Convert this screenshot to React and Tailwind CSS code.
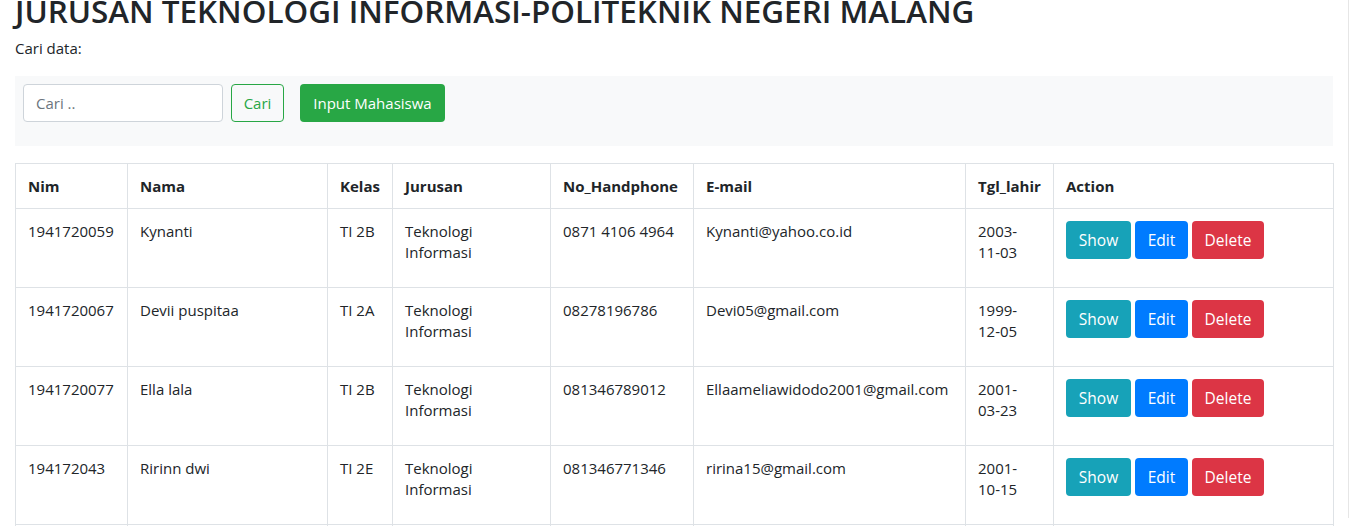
import React from "react";

const rows = [
  ["1941720059", "Kynanti", "TI 2B", "Teknologi Informasi", "0871 4106 4964", "Kynanti@yahoo.co.id", ["2003-", "11-03"]],
  ["1941720067", "Devii puspitaa", "TI 2A", "Teknologi Informasi", "08278196786", "Devi05@gmail.com", ["1999-", "12-05"]],
  ["1941720077", "Ella lala", "TI 2B", "Teknologi Informasi", "081346789012", "Ellaameliawidodo2001@gmail.com", ["2001-", "03-23"]],
  ["194172043", "Ririnn dwi", "TI 2E", "Teknologi Informasi", "081346771346", "ririna15@gmail.com", ["2001-", "10-15"]],
  ["1941720099", "Anisa", "TI 2C", "Teknologi Informasi", "081234567890", "anisa@gmail.com", ["2001-", "01-01"]],
];

const heads = ["Nim", "Nama", "Kelas", "Jurusan", "No_Handphone", "E-mail", "Tgl_lahir", "Action"];
const widths = [112, 200, 65, 158, 143, 272, 88, 280];

export default function App() {
  return (
    <div
      className="w-[1350px] h-[526px] overflow-hidden bg-white text-[#212529]"
      style={{ fontFamily: '"Open Sans", "Noto Sans", sans-serif' }}
    >
      <div className="w-[1349px] h-full border-r border-[#e6e6e6] px-[15px]">
        <h2 className="mt-[-8px] mb-[8px] text-[31.4px] leading-[38px] font-semibold tracking-normal whitespace-nowrap">
          JURUSAN TEKNOLOGI INFORMASI-POLITEKNIK NEGERI MALANG
        </h2>
        <p className="text-[15px] leading-[21px] mb-[17px]">Cari data:</p>
        <div className="bg-[#f8f9fa] h-[70px] p-[8px] flex items-start">
          <div className="w-[200px] h-[38px] border border-[#ced4da] rounded-[4px] bg-white flex items-center px-[12px] text-[15px] text-[#6c757d]">
            Cari ..
          </div>
          <div className="ml-[8px] w-[53px] h-[38px] border border-[#28a745] rounded-[4px] flex items-center justify-center text-[15px] text-[#28a745]">
            Cari
          </div>
          <div className="ml-[16px] w-[145px] h-[38px] bg-[#28a745] rounded-[4px] flex items-center justify-center text-[15px] text-white">
            Input Mahasiswa
          </div>
        </div>
        <table className="mt-[17px] w-[1319px] table-fixed border-collapse text-[15px] leading-[21px]">
          <colgroup>
            {widths.map((w, i) => (
              <col key={i} style={{ width: w }} />
            ))}
          </colgroup>
          <thead>
            <tr>
              {heads.map((h) => (
                <th key={h} className="border border-[#dee2e6] px-[12px] pt-[12px] pb-[11px] text-left font-bold align-top">
                  {h}
                </th>
              ))}
            </tr>
          </thead>
          <tbody>
            {rows.map((r, ri) => (
              <tr key={ri}>
                {r.map((c, ci) => (
                  <td key={ci} className="border border-[#dee2e6] px-[12px] pt-[12px] align-top">
                    {Array.isArray(c) ? (
                      <>
                        {c[0]}
                        <br />
                        {c[1]}
                      </>
                    ) : (
                      c
                    )}
                  </td>
                ))}
                <td className="border border-[#dee2e6] px-[12px] pt-[12px] pb-[12px] align-top">
                  <div className="flex gap-[4px] mb-[16px]">
                    <div className="w-[65px] h-[38px] rounded-[4px] bg-[#17a2b8] text-white text-[15.5px] flex items-center justify-center">Show</div>
                    <div className="w-[53px] h-[38px] rounded-[4px] bg-[#007bff] text-white text-[15.5px] flex items-center justify-center">Edit</div>
                    <div className="w-[72px] h-[38px] rounded-[4px] bg-[#dc3545] text-white text-[15.5px] flex items-center justify-center">Delete</div>
                  </div>
                </td>
              </tr>
            ))}
          </tbody>
        </table>
      </div>
    </div>
  );
}
